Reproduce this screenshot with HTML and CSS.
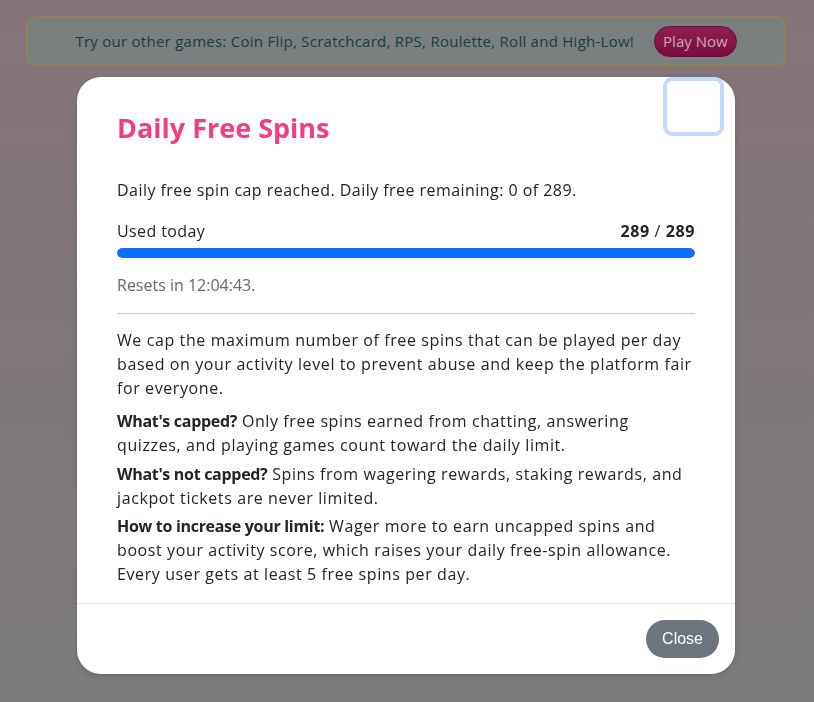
FILE: index.html
```html
<!DOCTYPE html>
<html lang="en">
<head>
<meta charset="utf-8">
<title>Daily Free Spins</title>
<link rel="stylesheet" href="styles.css">
</head>
<body>
<div class="page">
  <div class="promo">
    <span class="promo-text">Try our other games: Coin Flip, Scratchcard, RPS, Roulette, Roll and High-Low!</span>
    <button class="promo-btn">Play Now</button>
  </div>
</div>

<div class="modal-wrap">
  <div class="modal">
    <div class="modal-header">
      <h2 class="modal-title">Daily Free Spins</h2>
      <button class="btn-close" aria-label="Close"></button>
    </div>
    <div class="modal-body">
      <p class="status">Daily free spin cap reached. Daily free remaining: 0 of 289.</p>
      <div class="usage">
        <div class="usage-row">
          <span class="usage-label">Used today</span>
          <span class="usage-count"><b>289</b> / <b>289</b></span>
        </div>
        <div class="bar"><div class="bar-fill" style="width:100%"></div></div>
      </div>
      <p class="resets">Resets in 12:04:43.</p>
      <hr class="divider">
      <p class="info info-lead">We cap the maximum number of free spins that can be played per day based on your activity level to prevent abuse and keep the platform fair for everyone.</p>
      <p class="info"><b>What's capped?</b> Only free spins earned from chatting, answering quizzes, and playing games count toward the daily limit.</p>
      <p class="info info-tight"><b>What's not capped?</b> Spins from wagering rewards, staking rewards, and jackpot tickets are never limited.</p>
      <p class="info"><b>How to increase your limit:</b> Wager more to earn uncapped spins and boost your activity score, which raises your daily free-spin allowance. Every user gets at least 5 free spins per day.</p>
    </div>
    <div class="modal-footer">
      <button class="btn-secondary">Close</button>
    </div>
  </div>
</div>
</body>
</html>
```

FILE: styles.css
```css
* { box-sizing: border-box; }

html, body { height: 100%; }

body {
  margin: 0;
  font-family: "Open Sans", "Noto Sans", sans-serif;
  background: linear-gradient(180deg, #877479 0%, #807779 40%, #7d7b7c 100%);
  color: #212529;
}

.page {
  padding: 16px 28px 0 26px;
}

.promo {
  height: 50px;
  border: 1px solid #9c8838;
  border-radius: 10px;
  background: #7a8080;
  display: flex;
  align-items: center;
  justify-content: center;
  gap: 20px;
}

.promo-text {
  font-size: 15px;
  letter-spacing: 0.26px;
  color: #1c3b40;
}

.promo-btn {
  font-family: inherit;
  font-size: 15px;
  color: #cfa3b2;
  background: linear-gradient(180deg, #8e2152 0%, #7a0a40 100%);
  border: 1px solid #6e0a3a;
  border-radius: 16px;
  height: 31px;
  padding: 0 8px;
}

.modal-wrap {
  position: fixed;
  inset: 0;
  display: flex;
  justify-content: flex-start;
  align-items: flex-start;
  padding: 77px 0 0 77px;
}

.modal {
  width: 658px;
  background: #fff;
  border-radius: 24px;
  position: relative;
  box-shadow: 0 2px 6px rgba(0,0,0,0.15);
}

.modal-header {
  padding: 34px 40px 0;
}

.modal-title {
  margin: 0;
  font-size: 27px;
  line-height: 34px;
  font-weight: 700;
  color: #f23d85;
}

.btn-close {
  position: absolute;
  top: 0;
  right: 11px;
  width: 61px;
  height: 59px;
  background: transparent;
  border: 4px solid #c4dafc;
  border-radius: 9px;
  padding: 0;
}

.modal-body {
  padding: 33px 40px 17px;
  font-size: 16px;
  line-height: 24px;
}

.modal-body p { margin: 0; }

.status {
  margin-bottom: 17px !important;
  letter-spacing: 0.45px;
}

.usage-row {
  display: flex;
  justify-content: space-between;
}

.usage-label { letter-spacing: 0.4px; }

.usage-count { letter-spacing: 0.6px; }
.usage-count b { font-weight: 700; }

.bar {
  margin-top: 5px;
  height: 10px;
  border-radius: 5px;
  background: #e9ecef;
  overflow: hidden;
}

.bar-fill {
  height: 100%;
  background: #0d6efd;
  border-radius: 5px;
}

.resets {
  margin-top: 15px !important;
  color: #666a6e;
}

.divider {
  margin: 16px 0 14px;
  border: 0;
  border-top: 1px solid #c8c8c8;
}

.info {
  margin-bottom: 5px !important;
  letter-spacing: 0.6px;
}
.info-lead { margin-bottom: 9px !important; }
.info-tight { margin-bottom: 4px !important; }
.info:last-child { margin-bottom: 0 !important; }
.info b {
  font-weight: 700;
  letter-spacing: -0.3px;
}

.modal-footer {
  border-top: 1px solid #dee2e6;
  padding: 16px 16px 16px;
  display: flex;
  justify-content: flex-end;
}

.btn-secondary {
  font-family: "Liberation Sans", Arial, sans-serif;
  font-size: 16px;
  color: #fff;
  background: #6c757d;
  border: 0;
  border-radius: 19px;
  height: 38px;
  padding: 0 16px;
}
```
